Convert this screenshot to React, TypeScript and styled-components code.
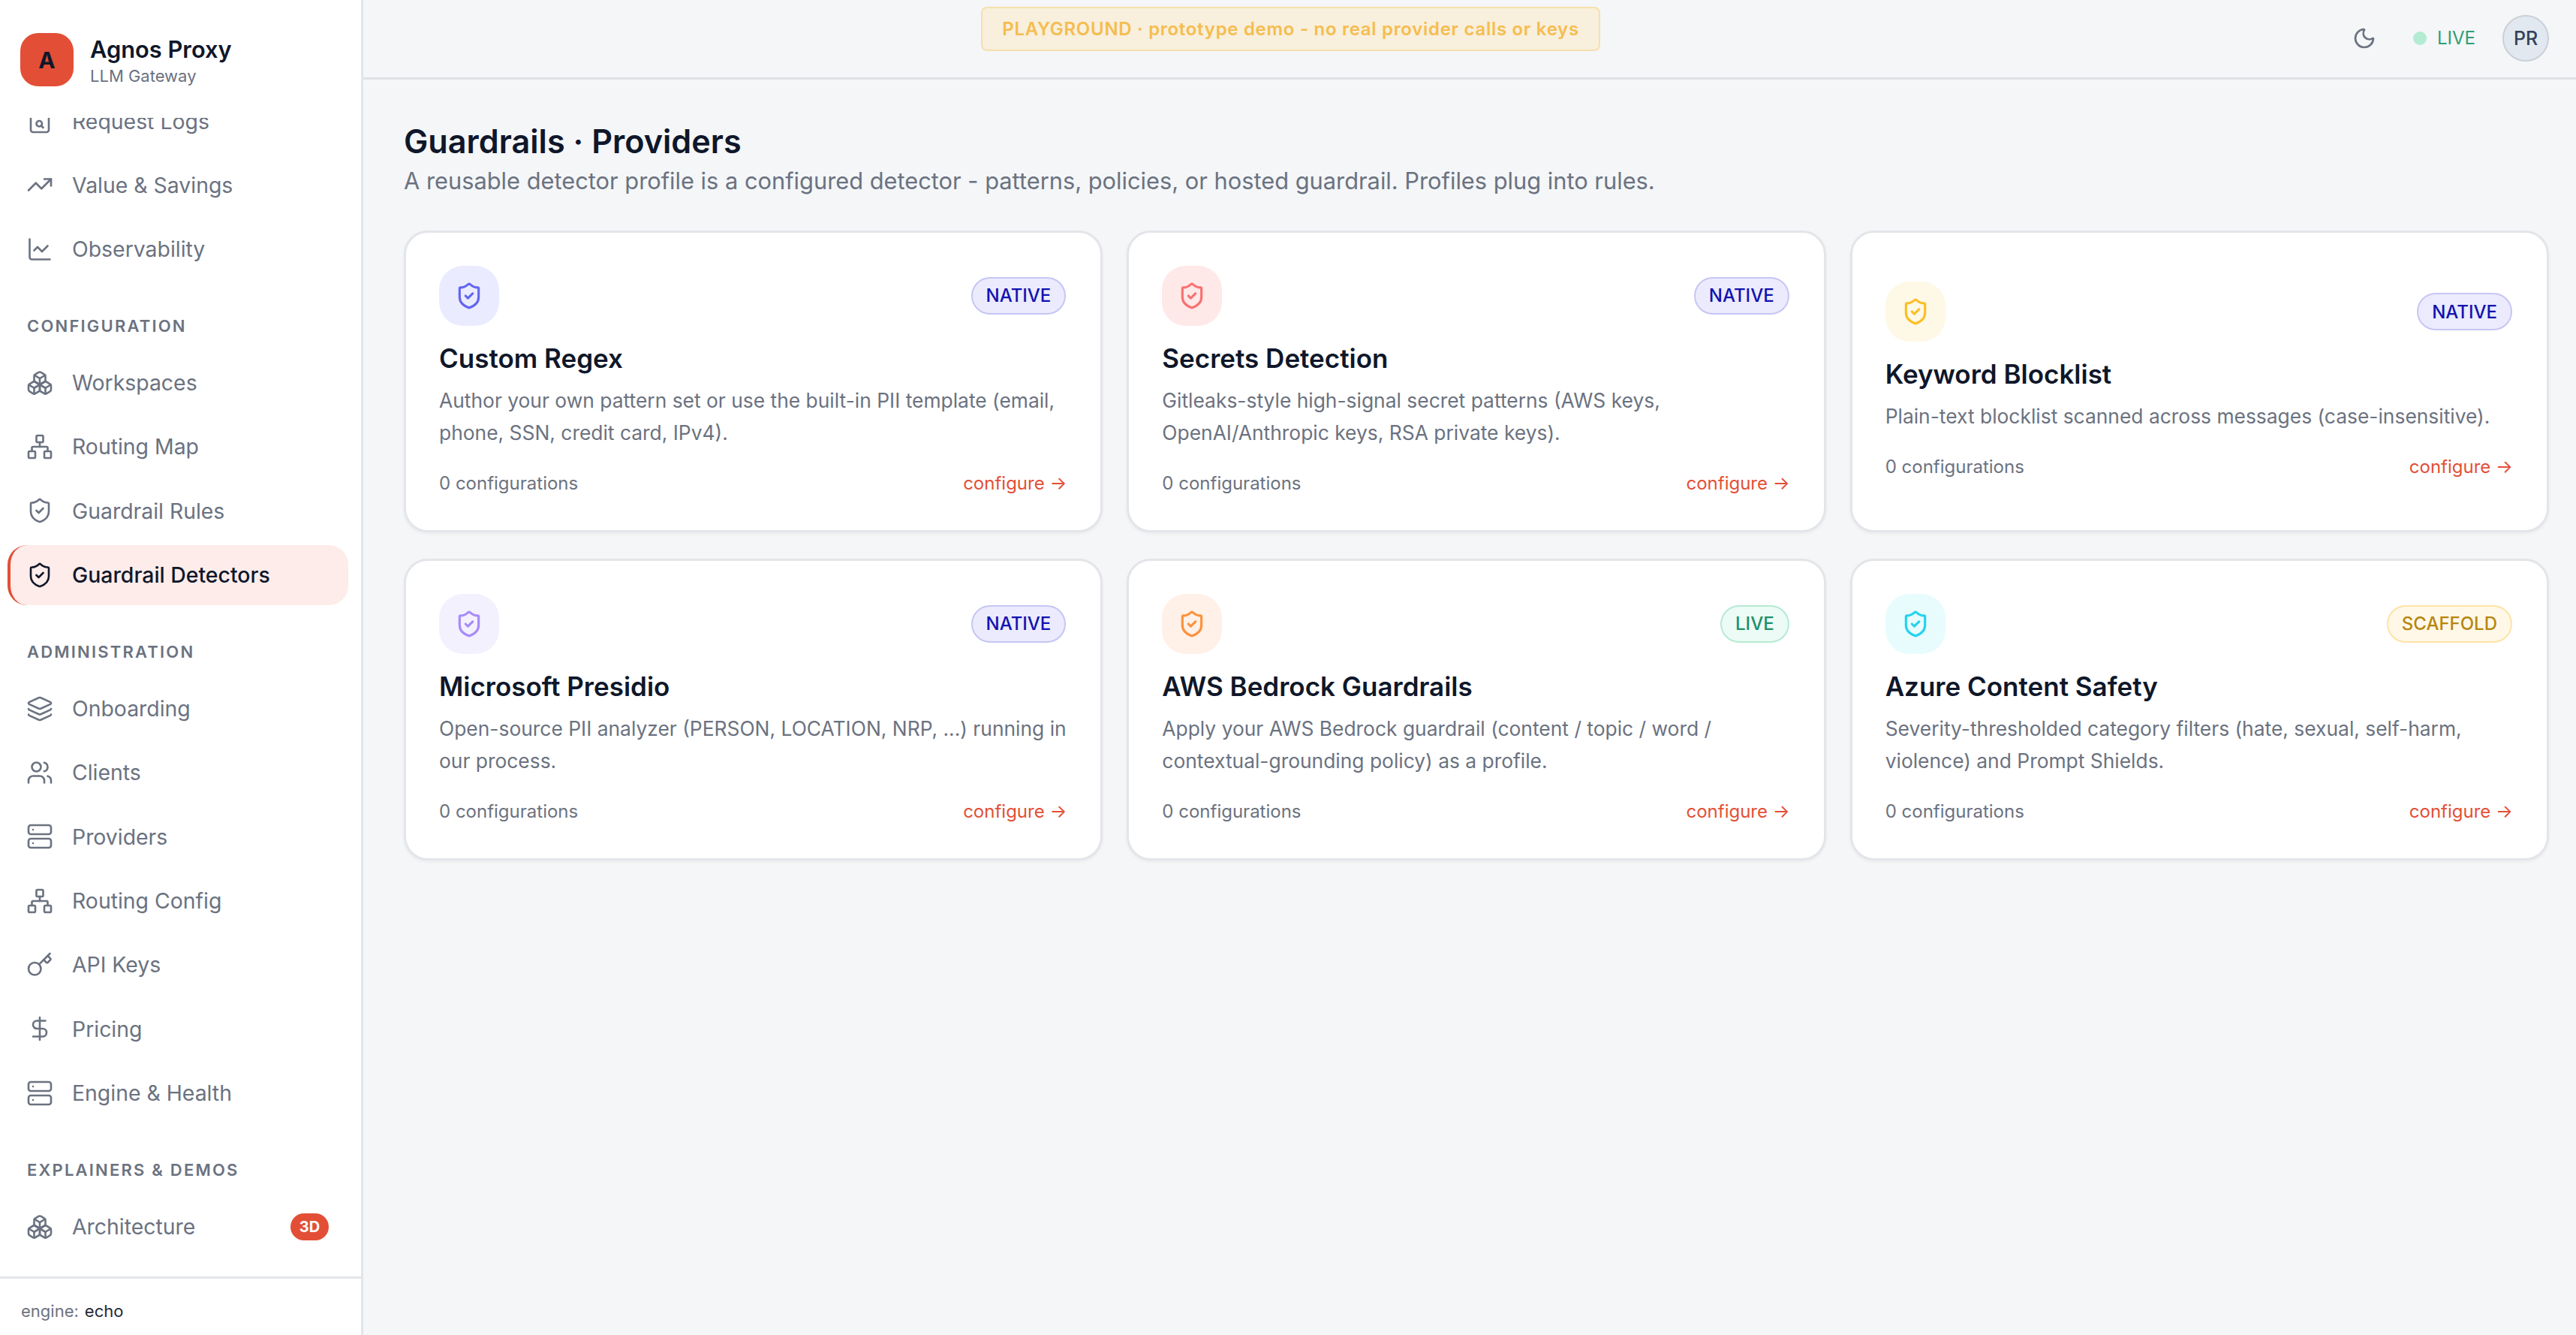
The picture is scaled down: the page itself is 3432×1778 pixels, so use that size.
import {
  Boxes,
  ChartLine,
  DollarSign,
  FileSearch,
  Key,
  Layers,
  LucideIcon,
  Moon,
  Network,
  Server,
  ShieldCheck,
  TrendingUp,
  Users,
} from "lucide-react"
import React from "react"
import styled, { createGlobalStyle } from "styled-components"

const GlobalStyle = createGlobalStyle`
  * {
    box-sizing: border-box;
  }
  html, body {
    margin: 0;
    padding: 0;
    height: 100%;
    overflow: hidden;
    background: #f4f6f8;
    font-family: Inter, "Liberation Sans", sans-serif;
    -webkit-font-smoothing: antialiased;
  }
`

const Shell = styled.div`
  display: flex;
  height: 100vh;
  position: relative;
`

const Sidebar = styled.aside`
  width: 484px;
  flex: none;
  display: flex;
  flex-direction: column;
  background: #ffffff;
  border-right: 3px solid #e3e5e9;
`

const Brand = styled.div`
  height: 157px;
  flex: none;
  display: flex;
  align-items: flex-start;
  gap: 22px;
  padding: 44px 0 0 27px;
`

const Logo = styled.div`
  width: 71px;
  height: 71px;
  border-radius: 24px;
  background: #e34f36;
  color: #0f172a;
  display: flex;
  align-items: center;
  justify-content: center;
  font-size: 30px;
  font-weight: 700;
`

const BrandText = styled.div`
  display: flex;
  flex-direction: column;
  gap: 1px;
  padding-top: 2px;
`

const BrandName = styled.div`
  font-size: 30.8px;
  line-height: 40px;
  font-weight: 600;
  color: #0f172a;
`

const BrandSub = styled.div`
  font-size: 22px;
  line-height: 28px;
  color: #6b7280;
`

const NavClip = styled.nav`
  flex: 1;
  min-height: 0;
  overflow: hidden;
`

const NavScroll = styled.div`
  margin-top: -36px;
  padding: 0 17px 0 10px;
  display: flex;
  flex-direction: column;
  gap: 46px;
`

const NavSection = styled.div`
  display: flex;
  flex-direction: column;
  gap: 5.33px;
`

const SectionLabel = styled.div`
  height: 32px;
  line-height: 32px;
  margin-bottom: 14.67px;
  padding-left: 26px;
  font-size: 22px;
  font-weight: 600;
  letter-spacing: 2.2px;
  color: #6b7280;
`

const NavItem = styled.a<{ $active?: boolean }>`
  height: 80px;
  display: flex;
  align-items: center;
  gap: 25px;
  padding: 0 26px 0 21px;
  border-left: 4px solid ${(props) => (props.$active ? "#e34f36" : "transparent")};
  border-radius: 26px;
  background: ${(props) => (props.$active ? "#fdecea" : "transparent")};
  color: ${(props) => (props.$active ? "#0f172a" : "#6b7280")};
  font-size: 28.4px;
  font-weight: ${(props) => (props.$active ? 500 : 400)};
  white-space: nowrap;

  svg {
    flex: none;
  }
`

const NavBadge = styled.span`
  margin-left: auto;
  width: 51px;
  height: 36px;
  border-radius: 18px;
  background: #e34f36;
  color: #ffffff;
  display: flex;
  align-items: center;
  justify-content: center;
  font-size: 20px;
  font-weight: 700;
`

const SidebarFooter = styled.div`
  height: 78px;
  flex: none;
  display: flex;
  align-items: center;
  padding: 10px 0 0 28px;
  border-top: 3px solid #e3e5e9;
  font-size: 22px;
  color: #6b7280;
`

const EngineName = styled.span`
  margin-left: 8px;
  color: #1f2937;
`

const Main = styled.main`
  flex: 1;
  min-width: 0;
  display: flex;
  flex-direction: column;
`

const TopBar = styled.header`
  height: 106px;
  flex: none;
  display: flex;
  align-items: center;
  justify-content: flex-end;
  padding: 0 36px 2px 0;
  border-bottom: 3px solid #dfe1e5;
`

const PlaygroundBanner = styled.div`
  position: absolute;
  top: 9px;
  left: 1307px;
  width: 825px;
  height: 59px;
  display: flex;
  align-items: center;
  justify-content: center;
  background: #f8efdc;
  border: 2px solid #f6e0ac;
  border-radius: 8px;
  color: #f5bd4f;
  font-size: 24px;
  font-weight: 600;
  letter-spacing: 0.7px;
  white-space: nowrap;
`

const ThemeButton = styled.button`
  width: 32px;
  height: 32px;
  padding: 0;
  border: 0;
  background: none;
  color: #6b7280;
  display: flex;
  margin-right: 49px;
`

const LiveDot = styled.span`
  width: 18px;
  height: 18px;
  border-radius: 50%;
  background: #b3ebd3;
  margin-right: 14px;
`

const LiveText = styled.span`
  font-size: 24px;
  color: #2e9e74;
  margin-right: 36px;
`

const Avatar = styled.div`
  width: 62px;
  height: 62px;
  border-radius: 50%;
  background: #e2e8f0;
  border: 2px solid #cbd0d8;
  color: #334155;
  display: flex;
  align-items: center;
  justify-content: center;
  font-size: 25px;
  font-weight: 500;
`

const Content = styled.div`
  flex: 1;
  padding: 54px 36px 0 54px;
`

const PageTitle = styled.h1`
  margin: 0 0 3px;
  font-size: 43.2px;
  line-height: 56px;
  font-weight: 600;
  color: #0f172a;
`

const PageSubtitle = styled.p`
  margin: 0 0 44px;
  font-size: 30.8px;
  line-height: 44px;
  color: #6b7280;
`

const CardGrid = styled.div`
  display: grid;
  grid-template-columns: repeat(3, 1fr);
  gap: 35px 32px;
`

const Card = styled.section`
  height: 402px;
  display: flex;
  flex-direction: column;
  justify-content: center;
  padding: 0 44px 2px;
  background: #ffffff;
  border: 3px solid #e3e5e9;
  border-radius: 32px;
  box-shadow: 0 2px 4px rgba(15, 23, 42, 0.05);
`

const CardTop = styled.div`
  display: flex;
  align-items: center;
  justify-content: space-between;
  margin-bottom: 20px;
  padding-right: 2px;
`

const IconTile = styled.div<{ $bg: string; $fg: string }>`
  width: 80px;
  height: 80px;
  border-radius: 32px;
  background: ${(props) => props.$bg};
  color: ${(props) => props.$fg};
  display: flex;
  align-items: center;
  justify-content: center;
`

const Tag = styled.span<{ $bg: string; $border: string; $fg: string }>`
  height: 50px;
  padding: 0 18px;
  display: flex;
  align-items: center;
  border-radius: 25px;
  background: ${(props) => props.$bg};
  border: 2px solid ${(props) => props.$border};
  color: ${(props) => props.$fg};
  font-size: 24px;
  font-weight: 500;
`

const CardTitle = styled.h2`
  margin: 0 0 12px;
  font-size: 35px;
  line-height: 46px;
  font-weight: 600;
  color: #0f172a;
`

const CardText = styled.p`
  margin: 0 -4px 29px 0;
  font-size: 26.4px;
  line-height: 43px;
  color: #6b7280;
`

const CardFooter = styled.div`
  display: flex;
  justify-content: space-between;
  padding-right: 1px;
  font-size: 24px;
  line-height: 34px;
  color: #6b7280;
`

const ConfigureLink = styled.a`
  color: #e34f36;
`

type NavEntry = { label: string; icon: LucideIcon; active?: boolean; badge?: string }

const navSections: { label?: string; items: NavEntry[] }[] = [
  {
    items: [
      { label: "Request Logs", icon: FileSearch },
      { label: "Value & Savings", icon: TrendingUp },
      { label: "Observability", icon: ChartLine },
    ],
  },
  {
    label: "CONFIGURATION",
    items: [
      { label: "Workspaces", icon: Boxes },
      { label: "Routing Map", icon: Network },
      { label: "Guardrail Rules", icon: ShieldCheck },
      { label: "Guardrail Detectors", icon: ShieldCheck, active: true },
    ],
  },
  {
    label: "ADMINISTRATION",
    items: [
      { label: "Onboarding", icon: Layers },
      { label: "Clients", icon: Users },
      { label: "Providers", icon: Server },
      { label: "Routing Config", icon: Network },
      { label: "API Keys", icon: Key },
      { label: "Pricing", icon: DollarSign },
      { label: "Engine & Health", icon: Server },
    ],
  },
  {
    label: "EXPLAINERS & DEMOS",
    items: [{ label: "Architecture", icon: Boxes, badge: "3D" }],
  },
]

const tagStyles = {
  NATIVE: { bg: "#ebebfd", border: "#c6c6f5", fg: "#1212b0" },
  LIVE: { bg: "#ecfbf5", border: "#b5ead3", fg: "#1f8f68" },
  SCAFFOLD: { bg: "#fff8e8", border: "#fde3a5", fg: "#b7860f" },
}

const detectors: {
  name: string
  text: string
  tag: keyof typeof tagStyles
  bg: string
  fg: string
}[] = [
  {
    name: "Custom Regex",
    text: "Author your own pattern set or use the built-in PII template (email, phone, SSN, credit card, IPv4).",
    tag: "NATIVE",
    bg: "#eaebfe",
    fg: "#6366f1",
  },
  {
    name: "Secrets Detection",
    text: "Gitleaks-style high-signal secret patterns (AWS keys, OpenAI/Anthropic keys, RSA private keys).",
    tag: "NATIVE",
    bg: "#fee8e8",
    fg: "#f87171",
  },
  {
    name: "Keyword Blocklist",
    text: "Plain-text blocklist scanned across messages (case-insensitive).",
    tag: "NATIVE",
    bg: "#fef8e6",
    fg: "#fbbf24",
  },
  {
    name: "Microsoft Presidio",
    text: "Open-source PII analyzer (PERSON, LOCATION, NRP, ...) running in our process.",
    tag: "NATIVE",
    bg: "#f4f1fe",
    fg: "#a78bfa",
  },
  {
    name: "AWS Bedrock Guardrails",
    text: "Apply your AWS Bedrock guardrail (content / topic / word / contextual-grounding policy) as a profile.",
    tag: "LIVE",
    bg: "#fff0e8",
    fg: "#fb923c",
  },
  {
    name: "Azure Content Safety",
    text: "Severity-thresholded category filters (hate, sexual, self-harm, violence) and Prompt Shields.",
    tag: "SCAFFOLD",
    bg: "#e8fcfe",
    fg: "#22d3ee",
  },
]

const App: React.FC = () => {
  return (
    <Shell>
      <GlobalStyle />
      <Sidebar>
        <Brand>
          <Logo>A</Logo>
          <BrandText>
            <BrandName>Agnos Proxy</BrandName>
            <BrandSub>LLM Gateway</BrandSub>
          </BrandText>
        </Brand>
        <NavClip>
          <NavScroll>
            {navSections.map((section, i) => (
              <NavSection key={i}>
                {section.label && <SectionLabel>{section.label}</SectionLabel>}
                {section.items.map((item) => (
                  <NavItem $active={item.active} key={item.label}>
                    <item.icon size={36} strokeWidth={1.75} />
                    {item.label}
                    {item.badge && <NavBadge>{item.badge}</NavBadge>}
                  </NavItem>
                ))}
              </NavSection>
            ))}
          </NavScroll>
        </NavClip>
        <SidebarFooter>
          engine:<EngineName>echo</EngineName>
        </SidebarFooter>
      </Sidebar>
      <Main>
        <TopBar>
          <ThemeButton>
            <Moon size={32} strokeWidth={2} />
          </ThemeButton>
          <LiveDot />
          <LiveText>LIVE</LiveText>
          <Avatar>PR</Avatar>
        </TopBar>
        <Content>
          <PageTitle>Guardrails · Providers</PageTitle>
          <PageSubtitle>
            A reusable detector profile is a configured detector - patterns, policies, or hosted guardrail. Profiles
            plug into rules.
          </PageSubtitle>
          <CardGrid>
            {detectors.map((d) => (
              <Card key={d.name}>
                <CardTop>
                  <IconTile $bg={d.bg} $fg={d.fg}>
                    <ShieldCheck size={38} strokeWidth={2} />
                  </IconTile>
                  <Tag $bg={tagStyles[d.tag].bg} $border={tagStyles[d.tag].border} $fg={tagStyles[d.tag].fg}>
                    {d.tag}
                  </Tag>
                </CardTop>
                <CardTitle>{d.name}</CardTitle>
                <CardText>{d.text}</CardText>
                <CardFooter>
                  <span>0 configurations</span>
                  <ConfigureLink>configure →</ConfigureLink>
                </CardFooter>
              </Card>
            ))}
          </CardGrid>
        </Content>
      </Main>
      <PlaygroundBanner>PLAYGROUND · prototype demo - no real provider calls or keys</PlaygroundBanner>
    </Shell>
  )
}

export default App
